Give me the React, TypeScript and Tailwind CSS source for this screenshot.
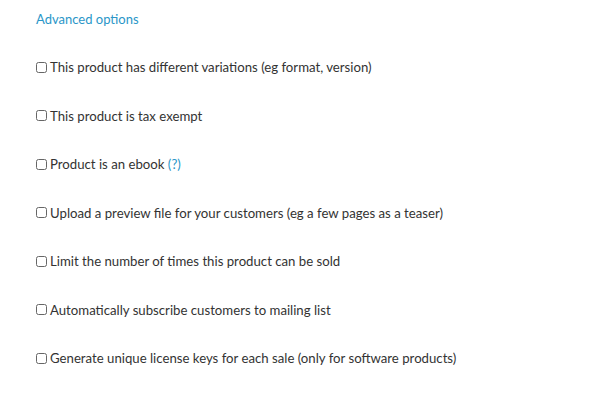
import React from "react";

const items: { label: string; help?: boolean }[] = [
  { label: "This product has different variations (eg format, version)" },
  { label: "This product is tax exempt" },
  { label: "Product is an ebook", help: true },
  { label: "Upload a preview file for your customers (eg a few pages as a teaser)" },
  { label: "Limit the number of times this product can be sold" },
  { label: "Automatically subscribe customers to mailing list" },
  { label: "Generate unique license keys for each sale (only for software products)" },
];

export default function App() {
  return (
    <div className="w-[600px] h-[400px] bg-white pl-[36px] pt-[11px]" style={{ fontFamily: "Lato, 'Open Sans', sans-serif" }}>
      <div className="text-[13px] leading-[16px] text-[#2a96c8]">Advanced options</div>
      <div className="flex flex-col gap-[32.5px] mt-[32px]">
        {items.map((it) => (
          <label key={it.label} className="flex items-center gap-[3px] text-[13.2px] leading-[16px] text-[#333]">
            <span className="w-[11px] h-[11px] border border-[#666] rounded-[2.5px] bg-white shrink-0" />
            <span>
              {it.label}
              {it.help && <span className="text-[#2a96c8]"> (?)</span>}
            </span>
          </label>
        ))}
      </div>
    </div>
  );
}
